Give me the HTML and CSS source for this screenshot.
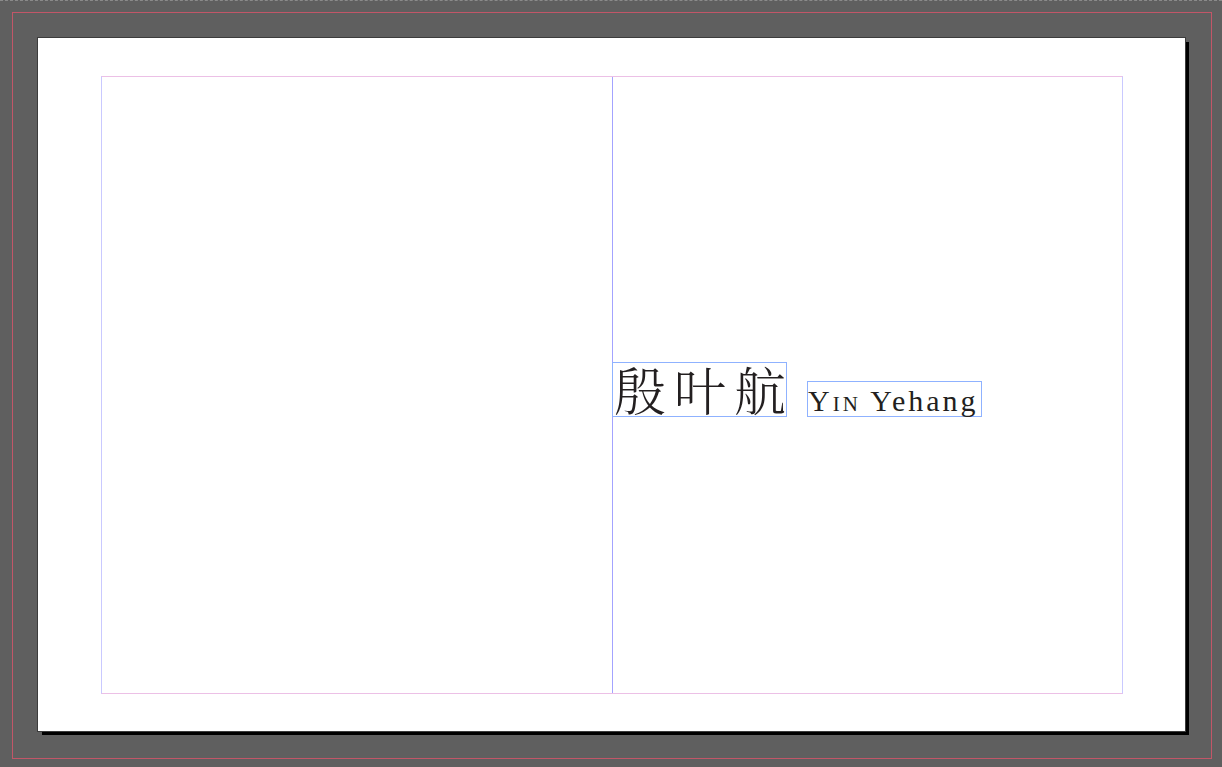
FILE: index.html
```html
<!DOCTYPE html>
<html lang="zh">
<head>
<meta charset="utf-8">
<title>Layout</title>
<link rel="stylesheet" href="styles.css">
</head>
<body>
<div class="pasteboard">
  <div class="bleed">
    <div class="page">
      <div class="margins">
        <div class="col col-left"></div>
        <div class="col col-right">
          <div class="frames">
            <div class="frame frame-cn"><span class="cn">殷叶航</span></div>
            <div class="frame frame-en"><span class="en"><span class="sc">Yin</span> Yehang</span></div>
          </div>
        </div>
      </div>
    </div>
  </div>
</div>
</body>
</html>
```
FILE: styles.css
```css
html, body {
  margin: 0;
  padding: 0;
}
body {
  width: 1222px;
  height: 767px;
  overflow: hidden;
  background: #5f5f5f;
}
.pasteboard {
  height: 767px;
  box-sizing: border-box;
  border-top: 1px dashed #8a8a8a;
  padding: 11px 10px 0 12px;
}
.bleed {
  width: 1200px;
  height: 747px;
  box-sizing: border-box;
  border: 1px solid #c25668;
  padding: 25px 0 0 25px;
}
.page {
  width: 1147px;
  height: 693px;
  box-sizing: border-box;
  background: #ffffff;
  outline: 1px solid #3c3c3c;
  box-shadow: 1px 1px 0 #b5b5b5, 4px 4px 0 #000000;
  padding: 38px 0 0 63px;
}
.margins {
  width: 1022px;
  height: 618px;
  box-sizing: border-box;
  border-top: 1px solid #ecc0e6;
  border-bottom: 1px solid #ecc0e6;
  border-left: 1px solid #c9c9ff;
  border-right: 1px solid #c9c9ff;
  display: grid;
  grid-template-columns: 511px 1fr;
}
.col-left {
  border-right: 1px solid #a3a3ff;
}
.col-right {
  padding-top: 285px;
}
.frames {
  display: flex;
  align-items: flex-end;
  gap: 20px;
}
.frame {
  box-sizing: border-box;
  border: 1px solid #8fb2ff;
  position: relative;
}
.frame-cn {
  width: 175px;
  height: 55px;
  margin-left: -1px;
}
.cn {
  position: absolute;
  left: 1px;
  top: -6px;
  font-family: "Noto Serif CJK SC", "Noto Sans CJK SC", serif;
  font-weight: 300;
  font-size: 52px;
  letter-spacing: 8px;
  line-height: 64px;
  color: #231f20;
  white-space: nowrap;
}
.frame-en {
  width: 175px;
  height: 36px;
}
.en {
  position: absolute;
  left: 0;
  bottom: 0;
  font-family: "Liberation Serif", serif;
  font-size: 30px;
  letter-spacing: 3px;
  line-height: 1;
  color: #231f20;
  white-space: nowrap;
}
.sc {
  font-variant: small-caps;
}
```
